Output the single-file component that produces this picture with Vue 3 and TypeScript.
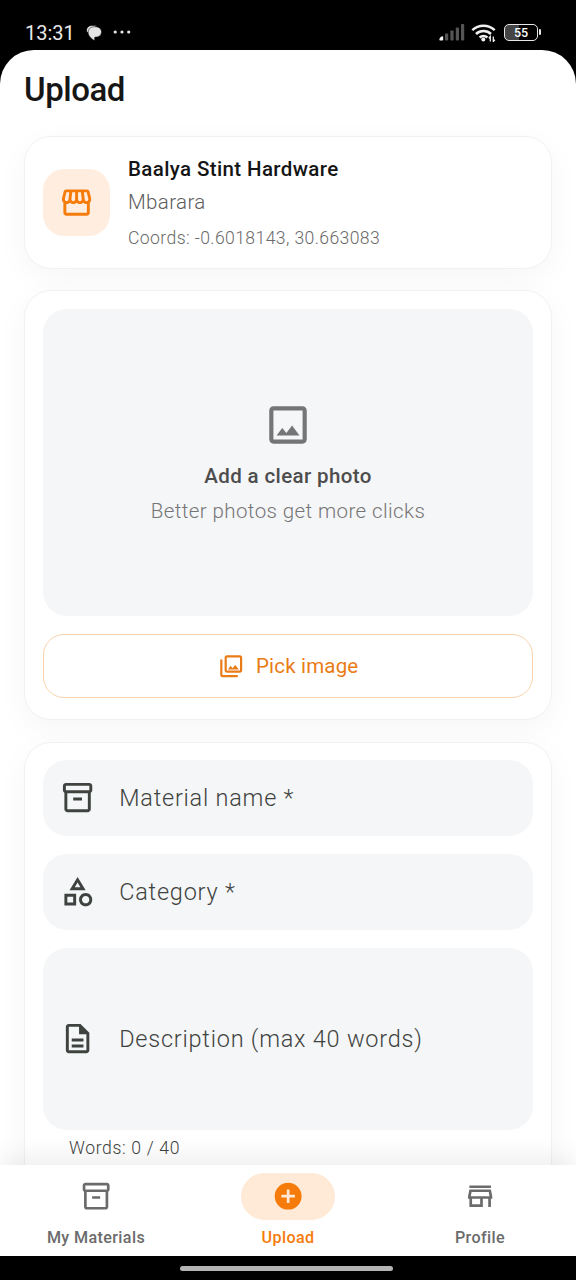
<script setup lang="ts">
interface Field {
  label: string
  icon: string
  tall?: boolean
}

interface Tab {
  label: string
  icon: string
  active?: boolean
}

const icons: Record<string, string> = {
  storefront:
    'M21.9 8.89l-1.05-4.37c-.22-.9-1-1.52-1.91-1.52H5.05c-.9 0-1.69.63-1.9 1.52L2.1 8.89c-.24 1.02-.02 2.06.62 2.88.08.11.19.19.28.29V19c0 1.1.9 2 2 2h14c1.1 0 2-.9 2-2v-6.94c.09-.09.2-.18.28-.28.64-.82.87-1.87.62-2.89zm-2.99-3.9l1.05 4.37c.1.42.01.84-.25 1.17-.14.18-.44.47-.94.47-.61 0-1.14-.49-1.21-1.14L16.98 5l1.93-.01zM13 5h1.96l.54 4.52c.05.39-.07.78-.33 1.07-.22.26-.54.41-.95.41-.67 0-1.22-.59-1.22-1.31V5zM8.49 9.52L9.04 5H11v4.69c0 .72-.55 1.31-1.29 1.31-.34 0-.65-.15-.89-.41-.25-.29-.37-.68-.33-1.07zm-4.45-.16L5.05 5h1.97l-.58 4.86c-.08.65-.6 1.14-1.21 1.14-.49 0-.8-.29-.93-.47-.27-.32-.36-.75-.26-1.17zM5 19v-6.03c.08.01.15.03.23.03.87 0 1.66-.36 2.24-.95.6.6 1.4.95 2.31.95.87 0 1.65-.36 2.23-.93.59.57 1.39.93 2.29.93.84 0 1.64-.35 2.24-.95.58.59 1.37.95 2.24.95.08 0 .15-.02.23-.03V19H5z',
  photo:
    'M19 3H5c-1.1 0-2 .9-2 2v14c0 1.1.9 2 2 2h14c1.1 0 2-.9 2-2V5c0-1.1-.9-2-2-2zm0 16H5V5h14v14zm-5.04-6.71l-2.75 3.54-1.96-2.36L6.5 17h11l-3.54-4.71z',
  library:
    'M20 4v12H8V4h12m0-2H8c-1.1 0-2 .9-2 2v12c0 1.1.9 2 2 2h12c1.1 0 2-.9 2-2V4c0-1.1-.9-2-2-2zm-8.5 9.67l1.69 2.26 2.48-3.1L19 15H9zM2 6v14c0 1.1.9 2 2 2h14v-2H4V6H2z',
  box: 'M20 2H4c-1 0-2 .9-2 2v3.01c0 .72.43 1.34 1 1.69V20c0 1.1 1.1 2 2 2h14c.9 0 2-.9 2-2V8.7c.57-.35 1-.97 1-1.69V4c0-1.1-1-2-2-2zm-1 18H5V9h14v11zm1-13H4V4h16v3zM9 12h6v2H9z',
  category:
    'M12 2l-5.5 9h11L12 2zm0 3.84L13.93 9h-3.87L12 5.84zM17.5 13c-2.49 0-4.5 2.01-4.5 4.5s2.01 4.5 4.5 4.5 4.5-2.01 4.5-4.5-2.01-4.5-4.5-4.5zm0 7c-1.38 0-2.5-1.12-2.5-2.5s1.12-2.5 2.5-2.5 2.5 1.12 2.5 2.5-1.12 2.5-2.5 2.5zM3 21.5h8v-8H3v8zm2-6h4v4H5v-4z',
  description:
    'M8 16h8v2H8zm0-4h8v2H8zm6-10H6c-1.1 0-2 .9-2 2v16c0 1.1.89 2 1.99 2H18c1.1 0 2-.9 2-2V8l-6-6zm4 18H6V4h7v5h5v11z',
  add: 'M12 2C6.48 2 2 6.48 2 12s4.48 10 10 10 10-4.48 10-10S17.52 2 12 2zm5 11h-4v4h-2v-4H7v-2h4V7h2v4h4v2z',
  store:
    'M18.36 9l.6 3H5.04l.6-3h12.72M20 4H4v2h16V4zm0 3H4l-1 5v2h1v6h10v-6h4v6h2v-6h1v-2l-1-5zM6 18v-4h6v4H6z',
}

const fields: Field[] = [
  { label: 'Material name *', icon: 'box' },
  { label: 'Category *', icon: 'category' },
  { label: 'Description (max 40 words)', icon: 'description', tall: true },
]

const tabs: Tab[] = [
  { label: 'My Materials', icon: 'box' },
  { label: 'Upload', icon: 'add', active: true },
  { label: 'Profile', icon: 'store' },
]
</script>

<template>
  <div class="phone">
    <header class="status">
      <div class="status-left">
        <span class="clock">13:31</span>
        <svg class="chat" viewBox="0 0 16 16">
          <path d="M1.200 7.500C-.3 3.500 2.500.9 6 .8h4.500L5 4z" fill="#dcdcdc" />
          <path d="M9 1.700c3.900 0 6.500 2.200 6.500 5.200s-2.200 5-5.300 5.200l-1.500.1v3.400C5.800 14 2.100 11 2.100 7.200 2.100 3.800 5 1.700 9 1.700z" fill="#e4e4e4" stroke="#000" stroke-width=".5" />
        </svg>
        <svg class="dots" viewBox="0 0 18 4" fill="#e4e4e4">
          <circle cx="2.200" cy="2" r="1.600" /><circle cx="9" cy="2" r="1.600" /><circle cx="15.700" cy="2" r="1.600" />
        </svg>
      </div>
      <div class="status-right">
        <svg class="signal" viewBox="0 0 26 17">
          <g fill="#555">
            <rect x="6" y="9.500" width="3.200" height="7" rx=".8" />
            <rect x="11.400" y="6.500" width="3.200" height="10" rx=".8" />
            <rect x="16.800" y="3.500" width="3.200" height="13" rx=".8" />
            <rect x="22" y="0" width="3.200" height="16.500" rx=".8" />
          </g>
          <path d="M.3 15.500c0-1.500 2-3.300 3.200-3.300.5 0 .7.300.7.800v2.700c0 .5-.3.800-.8.800H1.200c-.6 0-.9-.4-.9-1z" fill="#f4f4f4" />
        </svg>
        <svg class="wifi" viewBox="0 0 26 19">
          <g fill="none" stroke="#f0f0f0" stroke-width="2.500">
            <path d="M1.300 7.200a16.500 16.500 0 0 1 22.400 0" />
            <path d="M5 11a11.200 11.200 0 0 1 15 0" />
            <path d="M8.600 14.500a6 6 0 0 1 7.800 0" />
          </g>
          <circle cx="12.300" cy="16.400" r="2" fill="#f0f0f0" />
          <path d="M19.300 18.500v-5l-1.500 1.700M22.300 13.500v5l1.500-1.700" fill="none" stroke="#f0f0f0" stroke-width="1.300" />
        </svg>
        <div class="battery"><span>55</span></div>
      </div>
    </header>

    <main class="screen">
      <h1>Upload</h1>

      <section class="card shop">
        <div class="shop-tile">
          <svg class="i35" viewBox="0 0 24 24"><path :d="icons.storefront" /></svg>
        </div>
        <div class="shop-text">
          <div class="shop-name">Baalya Stint Hardware</div>
          <div class="shop-town">Mbarara</div>
          <div class="shop-coords">Coords: -0.6018143, 30.663083</div>
        </div>
      </section>

      <section class="card photo-card">
        <div class="drop">
          <svg class="i50" viewBox="0 0 24 24"><path :d="icons.photo" /></svg>
          <div class="drop-title">Add a clear photo</div>
          <div class="drop-hint">Better photos get more clicks</div>
        </div>
        <button class="pick" type="button">
          <svg class="i27" viewBox="0 0 24 24"><path :d="icons.library" /></svg>
          <span>Pick image</span>
        </button>
      </section>

      <section class="card form">
        <div v-for="f in fields" :key="f.label" class="field" :class="{ tall: f.tall }">
          <svg class="i35" viewBox="0 0 24 24"><path :d="icons[f.icon]" /></svg>
          <span>{{ f.label }}</span>
        </div>
        <div class="words">Words: 0 / 40</div>
      </section>
    </main>

    <nav class="tabs">
      <div v-for="t in tabs" :key="t.label" class="tab" :class="{ active: t.active }">
        <div class="pill">
          <svg class="i32" viewBox="0 0 24 24"><path :d="icons[t.icon]" /></svg>
        </div>
        <span>{{ t.label }}</span>
      </div>
    </nav>
    <footer class="gesture"><div class="handle"></div></footer>
  </div>
</template>

<style>
body {
  margin: 0;
  background: #000;
}
</style>

<style scoped>
.phone {
  width: 576px;
  height: 1280px;
  display: flex;
  flex-direction: column;
  overflow: hidden;
  background: #000;
  font-family: Roboto, 'Liberation Sans', sans-serif;
}
.phone * {
  box-sizing: border-box;
}
svg {
  display: block;
  flex: none;
  fill: currentColor;
}
.i27 { width: 26.400px; height: 26.400px; }
.i32 { width: 32.300px; height: 32.300px; }
.i35 { width: 35.200px; height: 35.200px; }
.i50 { width: 50px; height: 50px; }

.status {
  height: 50px;
  flex: none;
  display: flex;
  justify-content: space-between;
  padding: 16px 38px 0 25px;
  color: #e8e8e8;
}
.status-left,
.status-right {
  display: flex;
  align-items: center;
  height: 33px;
}
.clock {
  font-size: 20px;
  font-weight: 400;
  letter-spacing: 0;
  width: 61px;
}
.chat { width: 16px; height: 16px; }
.dots { width: 18px; height: 4px; margin-left: 11px; margin-top: -2px; }
.signal { width: 26px; height: 17px; }
.wifi { width: 26px; height: 19px; margin-left: 6px; }
.battery {
  position: relative;
  width: 34px;
  height: 17px;
  margin-left: 7px;
  margin-top: -1px;
  border: 1.500px solid #e8e8e8;
  border-radius: 5px;
  background: linear-gradient(to right, #444 45%, #000 45%);
  display: flex;
  align-items: center;
  justify-content: center;
  font-size: 12.500px;
  font-weight: 500;
  color: #fff;
}
.battery::after {
  content: '';
  position: absolute;
  right: -4px;
  top: 4px;
  width: 2px;
  height: 6px;
  border-radius: 1px;
  background: #e8e8e8;
}

.screen {
  flex: 1;
  min-height: 0;
  overflow: hidden;
  padding: 0 24px;
  background: #fff;
  border-radius: 34px 34px 0 0;
  display: flex;
  flex-direction: column;
}
h1 {
  margin: 0 0 21px;
  height: 65px;
  flex: none;
  padding-top: 20px;
  font-size: 33px;
  line-height: 40px;
  font-weight: 500;
  letter-spacing: -0.45px;
  color: #161616;
}
.card {
  flex: none;
  background: #fff;
  border: 1.500px solid #f1f1f1;
  border-radius: 27px;
  box-shadow: 0 9px 32px rgba(0, 0, 0, 0.04);
  padding: 18px;
}
.shop {
  height: 133px;
  display: flex;
  align-items: center;
  gap: 18px;
}
.shop-tile {
  width: 67px;
  height: 67px;
  border-radius: 21px;
  background: #ffeee0;
  color: #f57c0b;
  display: flex;
  align-items: center;
  justify-content: center;
}
.shop-name {
  font-size: 20.530px;
  line-height: 30px;
  font-weight: 500;
  letter-spacing: 0.37px;
  color: #151515;
}
.shop-town {
  margin-top: 3px;
  font-size: 20.530px;
  line-height: 30px;
  font-weight: 300;
  letter-spacing: 0.37px;
  color: #5c5c5c;
}
.shop-coords {
  margin-top: 8px;
  font-size: 17.600px;
  line-height: 26px;
  font-weight: 300;
  letter-spacing: 0.39px;
  color: #6a6a6a;
}

.photo-card {
  height: 430px;
  margin-top: 21px;
}
.drop {
  height: 307px;
  border-radius: 24px;
  background: #f5f6f8;
  display: flex;
  flex-direction: column;
  align-items: center;
  padding-top: 91px;
  color: #757575;
}
.drop-title {
  margin-top: 11px;
  font-size: 20.530px;
  line-height: 30px;
  font-weight: 500;
  letter-spacing: 0.37px;
  color: #4d4d4d;
}
.drop-hint {
  margin-top: 5px;
  font-size: 20.530px;
  line-height: 30px;
  font-weight: 300;
  letter-spacing: 0.4px;
  color: #757575;
}
.pick {
  width: 100%;
  height: 64px;
  margin-top: 18px;
  border: 1.500px solid #f9d3ae;
  border-radius: 21px;
  background: #fff;
  color: #e97c16;
  font: 400 20.530px/30px Roboto, 'Liberation Sans', sans-serif;
  letter-spacing: 0.17px;
  display: flex;
  align-items: center;
  justify-content: center;
  gap: 12px;
  padding: 0;
}

.form {
  height: 520px;
  margin-top: 22px;
  padding-top: 17px;
}
.field {
  height: 76px;
  margin-bottom: 18px;
  padding-left: 17px;
  border-radius: 24px;
  background: #f5f6f8;
  display: flex;
  align-items: center;
  gap: 24px;
  font-size: 23.470px;
  font-weight: 300;
  letter-spacing: 0.78px;
  color: #3f4340;
}
.field.tall {
  height: 182px;
  margin-bottom: 6px;
}
.words {
  padding-left: 26px;
  font-size: 17.600px;
  line-height: 24px;
  font-weight: 300;
  letter-spacing: 0.65px;
  color: #3f4340;
}

.tabs {
  position: relative;
  flex: none;
  height: 91px;
  display: grid;
  grid-template-columns: repeat(3, 1fr);
  padding-top: 8px;
  background: #fff;
  box-shadow: 0 -6px 27px rgba(0, 0, 0, 0.08);
}
.tab {
  display: flex;
  flex-direction: column;
  align-items: center;
  color: #6b6b6b;
  font-size: 16.130px;
  line-height: 22px;
  font-weight: 500;
  letter-spacing: 0.38px;
}
.tab.active {
  color: #f57c0b;
}
.pill {
  width: 94px;
  height: 47px;
  margin-bottom: 7px;
  border-radius: 24px;
  display: flex;
  align-items: center;
  justify-content: center;
}
.active .pill {
  background: #ffead7;
}
.gesture {
  position: relative;
  flex: none;
  height: 24px;
  background: #000;
  display: flex;
  justify-content: center;
  padding-top: 10px;
}
.handle {
  width: 213px;
  height: 5px;
  margin-left: -4px;
  border-radius: 3px;
  background: #b4b4b4;
}
</style>
